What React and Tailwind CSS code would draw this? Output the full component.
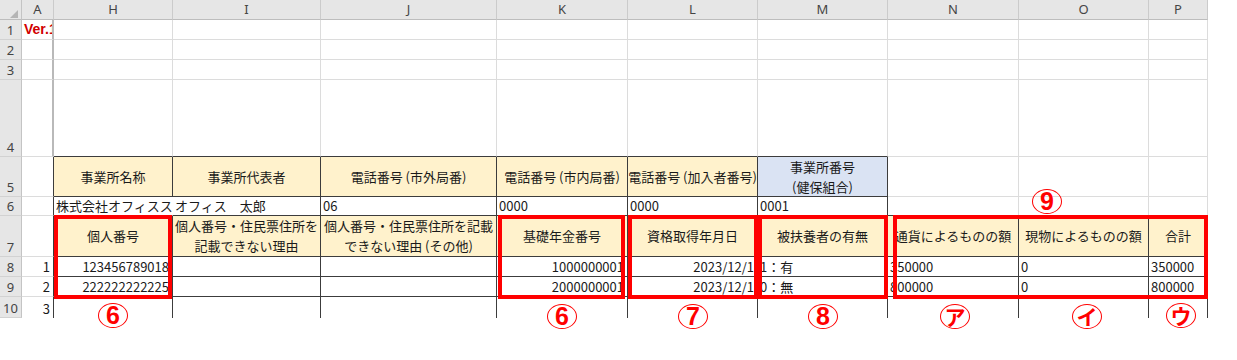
import React from 'react';

// header letters for the visible columns (B..G are hidden)
const COLS = ['A', 'H', 'I', 'J', 'K', 'L', 'M', 'N', 'O', 'P'];

const RIGHT = {
  d: 'border-r border-r-[#3c3c3c]',
  l: 'border-r border-r-[#dcdcdc]',
  f: 'border-r-2 border-r-[#b9b9b9]',
  n: 'border-r border-r-transparent',
};
const BOTTOM = {
  d: 'border-b border-b-[#3c3c3c]',
  l: 'border-b border-b-[#dcdcdc]',
  n: '',
};
const ALIGN = {
  c: 'items-center justify-center text-center',
  l: 'items-center justify-start pl-[2px]',
  r: 'items-center justify-end pr-[3px]',
  rt: 'items-start justify-end pr-[3px] pt-[2px]',
};

const GOLD = 'bg-[#fff2cc]';
const BLUE = 'bg-[#dae3f3]';

const blank = (r = 'l', b = 'l') => ({ t: '', r, b });

const rows = [
  {
    n: 1,
    cells: [
      { t: 'Ver.1', a: 'l', r: 'f', b: 'l', cls: 'text-[#d10000] text-[14px] font-bold font-[Liberation_Sans,Arial,sans-serif]' },
      ...Array(9).fill(0).map(() => blank()),
    ],
  },
  { n: 2, cells: [blank('f'), ...Array(9).fill(0).map(() => blank())] },
  { n: 3, cells: [blank('f'), ...Array(9).fill(0).map(() => blank())] },
  {
    n: 4,
    cells: [
      blank('f'),
      ...Array(6).fill(0).map(() => blank('l', 'd')),
      ...Array(3).fill(0).map(() => blank()),
    ],
  },
  {
    n: 5,
    cells: [
      blank('d'),
      { t: '事業所名称', a: 'c', r: 'd', b: 'd', bg: GOLD },
      { t: '事業所代表者', a: 'c', r: 'd', b: 'd', bg: GOLD },
      { t: '電話番号 (市外局番)', a: 'c', r: 'd', b: 'd', bg: GOLD },
      { t: '電話番号 (市内局番)', a: 'c', r: 'd', b: 'd', bg: GOLD },
      { t: '電話番号 (加入者番号)', a: 'c', r: 'd', b: 'd', bg: GOLD },
      { t: ['事業所番号', '(健保組合)'], a: 'c', r: 'd', b: 'd', bg: BLUE },
      blank(),
      blank(),
      blank(),
    ],
  },
  {
    n: 6,
    cells: [
      blank('d'),
      { t: '株式会社オフィスステーション', a: 'l', r: 'n', b: 'd' },
      { t: 'オフィス　太郎', a: 'l', r: 'd', b: 'd' },
      { t: '06', a: 'l', r: 'd', b: 'd' },
      { t: '0000', a: 'l', r: 'd', b: 'd' },
      { t: '0000', a: 'l', r: 'd', b: 'd' },
      { t: '0001', a: 'l', r: 'd', b: 'd' },
      blank('l', 'd'),
      blank('l', 'd'),
      blank('l', 'd'),
    ],
  },
  {
    n: 7,
    cells: [
      blank('d'),
      { t: '個人番号', a: 'c', r: 'd', b: 'd', bg: GOLD },
      { t: ['個人番号・住民票住所を', '記載できない理由'], a: 'c', r: 'd', b: 'd', bg: GOLD },
      { t: ['個人番号・住民票住所を記載', 'できない理由 (その他)'], a: 'c', r: 'd', b: 'd', bg: GOLD },
      { t: '基礎年金番号', a: 'c', r: 'd', b: 'd', bg: GOLD },
      { t: '資格取得年月日', a: 'c', r: 'd', b: 'd', bg: GOLD },
      { t: '被扶養者の有無', a: 'c', r: 'd', b: 'd', bg: GOLD },
      { t: '通貨によるものの額', a: 'c', r: 'd', b: 'd', bg: GOLD },
      { t: '現物によるものの額', a: 'c', r: 'd', b: 'd', bg: GOLD },
      { t: '合計', a: 'c', r: 'd', b: 'd', bg: GOLD },
    ],
  },
  {
    n: 8,
    cells: [
      { t: '1', a: 'r', r: 'd', b: 'l' },
      { t: '123456789018', a: 'r', r: 'd', b: 'd' },
      blank('d', 'd'),
      blank('d', 'd'),
      { t: '1000000001', a: 'r', r: 'd', b: 'd' },
      { t: '2023/12/1', a: 'r', r: 'd', b: 'd' },
      { t: '1：有', a: 'l', r: 'd', b: 'd' },
      { t: '350000', a: 'l', r: 'd', b: 'd' },
      { t: '0', a: 'l', r: 'd', b: 'd' },
      { t: '350000', a: 'l', r: 'd', b: 'd' },
    ],
  },
  {
    n: 9,
    cells: [
      { t: '2', a: 'r', r: 'd', b: 'l' },
      { t: '222222222225', a: 'r', r: 'd', b: 'd' },
      blank('d', 'd'),
      blank('d', 'd'),
      { t: '2000000001', a: 'r', r: 'd', b: 'd' },
      { t: '2023/12/1', a: 'r', r: 'd', b: 'd' },
      { t: '0：無', a: 'l', r: 'd', b: 'd' },
      { t: '800000', a: 'l', r: 'd', b: 'd' },
      { t: '0', a: 'l', r: 'd', b: 'd' },
      { t: '800000', a: 'l', r: 'd', b: 'd' },
    ],
  },
  {
    n: 10,
    cells: [
      { t: '3', a: 'rt', r: 'd', b: 'n' },
      ...Array(9).fill(0).map(() => blank('d', 'n')),
    ],
  },
];

// red boxes drawn over the sheet
const boxes = [
  'left-[54px] w-[118px]',
  'left-[498px] w-[127px]',
  'left-[628px] w-[130px]',
  'left-[758px] w-[130px]',
  'left-[893px] w-[315px]',
];

const marks = [
  { t: '6', cls: 'left-[98px] top-[303px]' },
  { t: '6', cls: 'left-[547px] top-[304px]' },
  { t: '7', cls: 'left-[678px] top-[304px]' },
  { t: '8', cls: 'left-[808px] top-[304px]' },
  { t: '9', cls: 'left-[1032px] top-[189px]' },
  { t: 'ア', cls: 'left-[940px] top-[304px]', kana: true },
  { t: 'イ', cls: 'left-[1072px] top-[304px]', kana: true },
  { t: 'ウ', cls: 'left-[1166px] top-[303px]', kana: true },
];

function Cell({ c }) {
  const text = Array.isArray(c.t) ? (
    <span className="leading-[20px]">
      {c.t[0]}
      <br />
      {c.t[1]}
    </span>
  ) : (
    c.t
  );
  return (
    <div
      className={`flex overflow-hidden whitespace-nowrap ${RIGHT[c.r]} ${BOTTOM[c.b]} ${c.bg || ''} ${ALIGN[c.a || 'l']} ${c.cls || ''}`}
    >
      {text}
    </div>
  );
}

export default function App() {
  return (
    <div className="relative w-[1237px] h-[360px] bg-white overflow-hidden font-['Noto_Sans_CJK_JP',sans-serif] text-[13px] text-[#1a1a1a]">
      <div className="grid w-[1208px] grid-cols-[22px_32px_119px_148px_176px_131px_130px_130px_131px_130px_59px] grid-rows-[20px_20px_20px_20px_77px_40px_19px_41px_20px_20px_21px]">
        {/* column header row */}
        <div className="relative bg-[#e6e6e6] border-r border-r-[#c4c4c4] border-b border-b-[#bdbdbd]">
          <svg className="absolute left-0 top-0" width="22" height="20" viewBox="0 0 22 20">
            <polygon points="18,10 18,18 10,18" fill="#b5b5b5" />
          </svg>
        </div>
        {COLS.map((col) => (
          <div
            key={col}
            className="flex items-center justify-center bg-[#e6e6e6] border-r border-r-[#cbcbcb] border-b border-b-[#bdbdbd] text-[#444] font-['Noto_Sans',sans-serif] text-[13px]"
          >
            {col}
          </div>
        ))}

        {rows.map((row) => (
          <React.Fragment key={row.n}>
            <div className="flex items-end justify-center pb-[1px] bg-[#e6e6e6] border-r border-r-[#c4c4c4] border-b border-b-[#d2d2d2] text-[#444] font-['Noto_Sans',sans-serif] text-[13px] leading-[16px]">
              {row.n}
            </div>
            {row.cells.map((c, i) => (
              <Cell key={i} c={c} />
            ))}
          </React.Fragment>
        ))}
      </div>

      {boxes.map((b, i) => (
        <div key={i} className={`absolute top-[215px] h-[84px] border-4 border-[#ff0000] ${b}`} />
      ))}

      {marks.map((m, i) => (
        <div
          key={i}
          className={`absolute w-[30px] h-[25px] rounded-[50%] border border-[#ff0000] flex items-center justify-center text-[#ff0000] font-bold leading-none ${m.cls}`}
        >
          {m.kana ? (
            <span className="text-[21px] font-['Noto_Sans_CJK_JP',sans-serif]">{m.t}</span>
          ) : (
            <span className="text-[25px] font-['Liberation_Sans',Arial,sans-serif]">{m.t}</span>
          )}
        </div>
      ))}
    </div>
  );
}
